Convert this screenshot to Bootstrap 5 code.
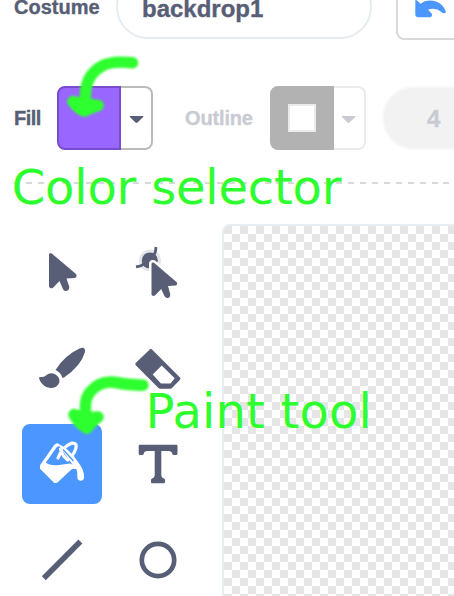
<!DOCTYPE html>
<html lang="en">
<head>
<meta charset="utf-8">
<meta name="viewport" content="width=device-width, initial-scale=1">
<title>Costume editor</title>
<link href="https://cdn.jsdelivr.net/npm/bootstrap@5.3.0/dist/css/bootstrap.min.css" rel="stylesheet">
<style>
body{font-family:"Liberation Sans",Arial,sans-serif;font-weight:700;color:#575e75;width:454px;height:596px;background:#fff}
svg{display:block}
.editor{width:454px;height:596px}
.top-row{height:40px;padding-left:14px}
.lbl{font-size:20px;line-height:24px;-webkit-text-stroke:.35px}
.lbl-costume{width:102px;margin-bottom:21px}
.name-field{width:256px;height:64px;border:2px solid #e6edf2;border-radius:32px;margin-bottom:1px;padding:0 24px;font-size:24px;line-height:63px;-webkit-text-stroke:.35px}
.undo-btn{width:80px;height:66px;border:2px solid #d9d9d9;border-radius:8px;margin-left:24px}
.color-row{height:64px;margin-top:46px;padding-left:14px}
.lbl-fill{width:43px;letter-spacing:-.5px}
.lbl-outline{width:85px;margin-left:32px;letter-spacing:-.15px}
.swatch{width:64px;height:64px;border:2px solid #774dcb;border-radius:8px 0 0 8px;background:#96f}
.drop{width:32px;height:64px;border:2px solid #bbb;border-left:0;border-radius:0 8px 8px 0}
.off{color:#c9cbd3}
.off.drop{border-color:#ebebeb}
.swatch-off{border-color:#b2b2b2;background:#b2b2b2}
.chip{width:28px;height:28px;border:2px solid #ebebeb}
.width-field{width:120px;height:64px;margin-left:16px;border:2px solid #f8f8f8;border-radius:32px;background:#f2f2f2;padding-left:43px;font-size:24px;line-height:62px;-webkit-text-stroke:.35px}
.divider{width:435px;height:2px;margin:32px 0 40px 14px;background:repeating-linear-gradient(90deg,#d9d9d9 0 6px,transparent 6px 11.93px)}
.tools{width:180px;margin:8px 20px 0 22px;display:grid;grid-template-columns:80px 80px;grid-auto-rows:80px;gap:16px}
.tool{width:80px;height:80px;border-radius:8px}
.tool.active{background:#4c97ff}
.board{width:240px;height:380px;border:2px solid #e8edf1;border-radius:8px 0 0 0;background:repeating-conic-gradient(#fff 0 25%,#e5e5e5 0 50%) 0 0/16px 16px}
.notes{pointer-events:none}
.notes text{font:400 48px "DejaVu Sans",sans-serif;fill:#2eff2e}
.note-color{letter-spacing:-.2px}
.note-paint{letter-spacing:.15px}
.soft{filter:blur(1.1px)}
</style>
<script src="https://cdn.jsdelivr.net/npm/bootstrap@5.3.0/dist/js/bootstrap.bundle.min.js"></script>
</head>
<body class="overflow-hidden">
<main class="editor position-relative overflow-hidden">
  <div class="top-row d-flex align-items-end">
    <div class="lbl lbl-costume flex-shrink-0">Costume</div>
    <div class="name-field flex-shrink-0">backdrop1</div>
    <div class="undo-btn flex-shrink-0">
      <svg width="56" height="64" viewBox="398 -26 56 64"><path fill="#4c97ff" d="M415.300-1Q415.300-3 417-1.500L420.500 1.800Q427-3.500 436-.5Q443 2 445.600 9Q446.300 11.600 444 11.300Q442.800 11.200 441.500 10Q435.500 5 428 7.700L431 10.800Q433 12.800 431.200 14.700Q430.500 15.300 429 15.300H418.500Q415.300 15.300 415.300 12.500Z"/></svg>
    </div>
  </div>
  <div class="color-row d-flex align-items-center">
    <div class="lbl lbl-fill flex-shrink-0">Fill</div>
    <div class="swatch flex-shrink-0"></div>
    <div class="drop flex-shrink-0"><svg width="30" height="60" viewBox="121 88 30 60"><path fill="#575e75" d="M130.200 116h12.700q1 .2.300 1.100l-5.700 5.500q-1 .9-2 0l-5.600-5.500q-.7-.8.300-1.100z"/></svg></div>
    <div class="lbl lbl-outline off flex-shrink-0">Outline</div>
    <div class="swatch swatch-off flex-shrink-0 d-flex align-items-center justify-content-center"><div class="chip bg-white"></div></div>
    <div class="drop off flex-shrink-0"><svg width="30" height="60" viewBox="121 88 30 60"><path fill="currentColor" d="M129.200 116h12.700q1 .2.300 1.100l-5.700 5.500q-1 .9-2 0l-5.600-5.500q-.7-.8.300-1.100z"/></svg></div>
    <div class="width-field off flex-shrink-0">4</div>
  </div>
  <div class="divider"></div>
  <div class="d-flex">
    <div class="tools flex-shrink-0">
      <div class="tool"><svg width="80" height="80" viewBox="22 232 80 80"><path fill="#575e75" d="M49 254.500Q49.500 252 51.800 253.500L76 274Q77.500 276.500 75 278L66.500 278.400L69.200 286.500Q69.700 290 66.500 291Q63.700 291.300 62.700 288.500L59.500 281L53 287.800Q50 289.300 49 286.500Z"/></svg></div>
      <div class="tool"><svg width="80" height="80" viewBox="118 232 80 80"><circle cx="150" cy="260.500" r="11" fill="#e3e5e9"/><circle cx="149.800" cy="260.500" r="8" fill="#575e75"/><path d="M154 255l1.500-3.500.5-4.500M144 264l-3.500 2-4.500.8" fill="none" stroke="#575e75" stroke-width="2.800"/><path fill="#575e75" stroke="#fff" stroke-width="5" paint-order="stroke" stroke-linejoin="round" d="M151.500 263.500Q152 261.700 154 262.800L177 282.500Q177.800 284.500 176 285.500L168 286L170.200 294Q170.500 297.300 168 298Q165.500 298.300 164.200 295.500L161.200 289L155 295.500Q152.200 296.800 151.500 294.500Z"/></svg></div>
      <div class="tool"><svg width="80" height="80" viewBox="22 328 80 80"><path fill="#575e75" d="M55.500 370Q65 355 80 348.300Q85.500 346.500 85 352Q81 366 64 377.500L62.500 378Q61 372.500 55.500 370ZM39 377.700Q39 376.600 41.500 377Q44.500 377.300 46.500 375Q50.500 372 55.500 374.500Q60.500 378 59.300 382.500Q57 388 50.500 388Q43 387 39.800 380.500Z"/></svg></div>
      <div class="tool"><svg width="80" height="80" viewBox="118 328 80 80"><path fill="#575e75" fill-rule="evenodd" d="M135.700 363L150 349.200Q151 348.300 152 349.500L180 377.500Q181 378.500 180 379.800L172.500 387.500Q171.500 388.700 170 388.700H160.500Q159 388.700 158 387.500L136 365.500Q134.700 364.300 135.700 363ZM152.700 374.500L161 383.500H170.500L174.700 378.300L161.700 365.500Z"/></svg></div>
      <div class="tool active"><svg width="80" height="80" viewBox="22 424 80 80"><path fill="none" stroke="#fff" stroke-width="3.200" stroke-linecap="round" stroke-linejoin="round" d="M57.500 445Q56.700 444.800 55.500 446L41.800 465.500Q41 467.500 43 469L55.500 481L71 467.500H77.800M58 458Q62 447 71.500 443.200Q78 442.500 75.500 449.500Q73 456 67.700 460Q61.500 455 60.500 449"/><path fill="#fff" d="M44 461.800Q51 466.500 59 465L70 463.500L75 466L58 482Q56 484 53.500 482.200L40.800 469.500Q39.500 467.500 41 465.500ZM57.500 443.500Q69 448 78 462Q84 469.500 84.200 477Q84 480.700 80.500 480.700Q77 480.300 77.300 476.500Q78 469 73.500 466Z"/><path d="M63 449.500L73.500 461" stroke="#4c97ff" stroke-width="1.300"/></svg></div>
      <div class="tool"><svg width="80" height="80" viewBox="118 424 80 80"><path fill="#575e75" d="M139.500 444.800H176.500Q177.500 444.800 177.500 446V453.500Q177.500 455 176 455H174Q172.500 455 172.200 453.500Q171.700 451 168.500 451H161.300V474.500Q161.300 478 164 478.500Q165 479 165 480V482Q165 483.300 163.800 483.300H152Q151 483.300 151 482V480Q151 479 152 478.500Q154.700 478 154.700 474.500V451H147.500Q144 451 143.800 453.500Q143.500 455 142 455H140.200Q138.700 455 138.700 453.500V446Q138.700 444.800 139.500 444.800Z"/></svg></div>
      <div class="tool"><svg width="80" height="80" viewBox="22 520 80 80"><path d="M43.800 578.300L80.400 541.600" stroke="#575e75" stroke-width="5.600"/></svg></div>
      <div class="tool"><svg width="80" height="80" viewBox="118 520 80 80"><circle cx="158" cy="560" r="16.200" fill="none" stroke="#575e75" stroke-width="4.700"/></svg></div>
    </div>
    <div class="board flex-shrink-0"></div>
  </div>
  <svg class="notes position-absolute top-0 start-0" width="454" height="596" viewBox="0 0 454 596">
    <g class="soft" fill="none" stroke="#2eff2e" stroke-width="11.500" stroke-linecap="round" stroke-linejoin="round">
      <path d="M132.500 62.800Q112 60.500 102 66Q86 75 85.500 94V104"/>
      <path fill="#2eff2e" d="M73 101.500Q77 108 84 111Q90 108 98 105.500L84 104Z"/>
      <path d="M143 385.200Q128 385 116 382.500Q101 380 91 391Q85 397 85.500 408V421"/>
      <path fill="#2eff2e" d="M74 414.500Q79 424 87 428Q91 422 98 417L86 418Z"/>
    </g>
    <text class="note-color" x="11.800" y="204">Color selector</text>
    <text class="note-paint" x="145.500" y="428">Paint tool</text>
  </svg>
</main>
</body>
</html>
